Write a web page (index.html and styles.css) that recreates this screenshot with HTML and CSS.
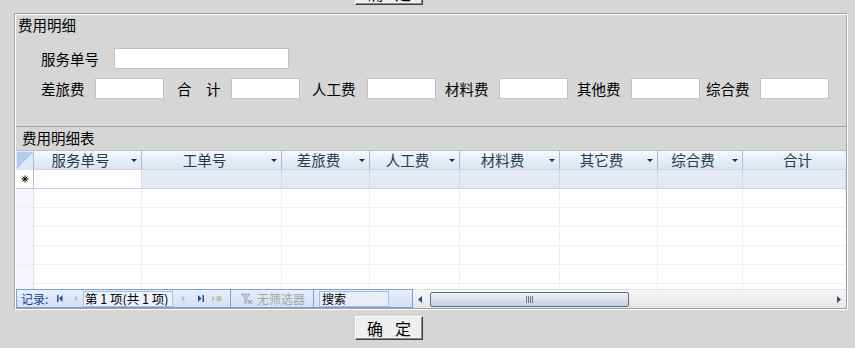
FILE: index.html
```html
<!DOCTYPE html>
<html lang="zh-CN">
<head>
<meta charset="utf-8">
<title>费用明细</title>
<link rel="stylesheet" href="styles.css">
</head>
<body>
<div class="btn-strip top-strip"><button class="btn"><span>确</span><span>定</span></button></div>

<div class="frame">
  <section class="upper">
    <div class="title">费用明细</div>
    <div class="row1">
      <span class="lbl lbl-wide">服务单号</span><span class="field field-wide"></span>
    </div>
    <div class="row2">
      <span class="lbl">差旅费</span><span class="field"></span>
      <span class="lbl">合　计</span><span class="field"></span>
      <span class="lbl">人工费</span><span class="field"></span>
      <span class="lbl">材料费</span><span class="field"></span>
      <span class="lbl">其他费</span><span class="field"></span>
      <span class="lbl">综合费</span><span class="field"></span>
    </div>
  </section>

  <div class="sub-label">费用明细表</div>

  <div class="sheet">
    <div class="grid-area">
      <div class="r hdr">
        <div class="c corner"></div>
        <div class="c"><span class="ht">服务单号</span><span class="arr"></span></div>
        <div class="c"><span class="ht">工单号</span><span class="arr"></span></div>
        <div class="c"><span class="ht">差旅费</span><span class="arr"></span></div>
        <div class="c"><span class="ht">人工费</span><span class="arr"></span></div>
        <div class="c"><span class="ht">材料费</span><span class="arr"></span></div>
        <div class="c"><span class="ht">其它费</span><span class="arr"></span></div>
        <div class="c"><span class="ht">综合费</span><span class="arr"></span></div>
        <div class="c last"><span class="ht ht-last">合计</span></div>
      </div>
      <div class="r newrow">
        <div class="c sel"><svg width="8" height="8" viewBox="0 0 8 8"><path d="M4 0.5V7.5M0.5 4H7.5M1.5 1.5L6.5 6.5M6.5 1.5L1.5 6.5" stroke="#000" stroke-width="1" fill="none"/></svg></div>
        <div class="c cur"></div><div class="c"></div><div class="c"></div><div class="c"></div><div class="c"></div><div class="c"></div><div class="c"></div><div class="c"></div>
      </div>
      <div class="r body"><div class="c sel"></div><div class="c"></div><div class="c"></div><div class="c"></div><div class="c"></div><div class="c"></div><div class="c"></div><div class="c"></div><div class="c"></div></div>
      <div class="r body"><div class="c sel"></div><div class="c"></div><div class="c"></div><div class="c"></div><div class="c"></div><div class="c"></div><div class="c"></div><div class="c"></div><div class="c"></div></div>
      <div class="r body"><div class="c sel"></div><div class="c"></div><div class="c"></div><div class="c"></div><div class="c"></div><div class="c"></div><div class="c"></div><div class="c"></div><div class="c"></div></div>
      <div class="r body"><div class="c sel"></div><div class="c"></div><div class="c"></div><div class="c"></div><div class="c"></div><div class="c"></div><div class="c"></div><div class="c"></div><div class="c"></div></div>
      <div class="r body"><div class="c sel"></div><div class="c"></div><div class="c"></div><div class="c"></div><div class="c"></div><div class="c"></div><div class="c"></div><div class="c"></div><div class="c"></div></div>
      <div class="r body"><div class="c sel"></div><div class="c"></div><div class="c"></div><div class="c"></div><div class="c"></div><div class="c"></div><div class="c"></div><div class="c"></div><div class="c"></div></div>
    </div>

    <div class="bar">
      <div class="nav">
        <div class="seg seg1">
          <span class="rec">记录:</span>
          <svg class="nb" width="15" height="17" viewBox="0 0 15 17"><rect x="5" y="5" width="1.5" height="7" fill="#1d4f91"/><path d="M10.5 5L7 8.5L10.5 12Z" fill="#1d4f91"/></svg>
          <svg class="nb" width="15" height="17" viewBox="0 0 15 17"><path d="M10 5.5L7 8.5L10 11.5Z" fill="#a9bfdd"/></svg>
          <span class="recbox">第 1 项(共 1 项)</span>
          <svg class="nb nb-next" width="16" height="17" viewBox="0 0 16 17"><path d="M6 5.5L9 8.5L6 11.5Z" fill="#a9bfdd"/></svg>
          <svg class="nb" width="16" height="17" viewBox="0 0 16 17"><path d="M6 5L9.5 8.5L6 12Z" fill="#1d4f91"/><rect x="10.5" y="5" width="1.5" height="7" fill="#1d4f91"/></svg>
          <svg class="nb" width="16" height="17" viewBox="0 0 16 17"><path d="M4 5.5L7 8.5L4 11.5Z" fill="#a9bfdd"/><rect x="8.5" y="6" width="5" height="5" fill="#d9c9a8"/><path d="M9 6.5L13 10.5M13 6.5L9 10.5M11 6V11M8.5 8.5H13.5" stroke="#bfb6a0" stroke-width="0.8"/></svg>
        </div>
        <div class="seg seg2">
          <svg class="filt" width="13" height="13" viewBox="0 0 13 13"><path d="M1 2H10L6.8 6V10.5L4.8 11.5V6Z" fill="#c7ccd4" stroke="#9aa3b1" stroke-width="0.8"/><path d="M8 8L12 12M12 8L8 12" stroke="#9aa3b1" stroke-width="1.2"/></svg>
          <span class="nofilt">无筛选器</span>
        </div>
        <div class="seg seg3">
          <span class="search">搜索</span>
        </div>
      </div>
      <div class="hscroll">
        <svg class="sarr" width="14" height="17" viewBox="0 0 14 17"><path d="M9 5L5 8.5L9 12Z" fill="#3a4a78"/></svg>
        <div class="thumb"><span class="grip"></span></div>
        <div class="spacer"></div>
        <svg class="sarr" width="14" height="17" viewBox="0 0 14 17"><path d="M5 5L9 8.5L5 12Z" fill="#3a4a78"/></svg>
      </div>
    </div>
  </div>
</div>

<div class="btn-strip bottom-strip"><button class="btn"><span>确</span><span>定</span></button></div>
</body>
</html>
```

FILE: styles.css
```css
html, body {
  margin: 0;
  padding: 0;
}
body {
  width: 855px;
  height: 348px;
  overflow: hidden;
  background: #d6d6d6;
  font-family: "Noto Sans CJK SC", "Noto Sans", sans-serif;
  color: #000;
}

/* buttons */
.btn-strip {
  display: flex;
  padding-left: 355px;
}
.top-strip {
  height: 5px;
  overflow: hidden;
  align-items: flex-end;
}
.bottom-strip {
  margin-top: 6px;
}
.btn {
  flex: none;
  width: 68px;
  height: 24px;
  box-sizing: border-box;
  padding: 0;
  margin: 0;
  background: #efefef;
  border: 1px solid;
  border-color: #ffffff #404040 #404040 #ffffff;
  box-shadow: inset -1px -1px #8a8a8a;
  font-family: "Noto Sans CJK SC", sans-serif;
  font-size: 16px;
  line-height: 20px;
  color: #000;
  display: flex;
  justify-content: center;
  align-items: center;
  gap: 12px;
}

/* outer frame */
.frame {
  margin: 8px 0 0 14px;
  width: 834px;
  height: 297px;
  box-sizing: border-box;
  border: 1px solid;
  border-color: #a0a0a0 #ffffff #ffffff #a0a0a0;
  box-shadow: inset 1px 1px #ffffff, inset -1px -1px #a0a0a0;
  padding: 1px;
  display: flex;
  flex-direction: column;
}

.upper {
  height: 111px;
  flex: none;
  border-bottom: 1px solid #a0a0a0;
  font-size: 14.5px;
}
.title {
  line-height: 20px;
  padding-left: 2px;
}
.row1 {
  display: flex;
  align-items: center;
  height: 21px;
  margin-top: 13px;
  padding-left: 25px;
}
.lbl {
  line-height: 20px;
  white-space: nowrap;
}
.lbl-wide {
  width: 73px;
}
.field {
  display: block;
  height: 21px;
  width: 69px;
  box-sizing: border-box;
  border: 1px solid #c3c3c3;
  background: #ffffff;
}
.field-wide {
  width: 175px;
}
.row2 {
  display: grid;
  grid-template-columns: 54px 82px 54px 81px 55px 78px 54px 78px 54px 75px 54px 69px;
  align-items: center;
  height: 21px;
  margin-top: 9px;
  padding-left: 25px;
}

.sub-label {
  flex: none;
  height: 23px;
  line-height: 22px;
  padding-left: 6px;
  font-size: 14.5px;
}

/* datasheet */
.sheet {
  flex: none;
  height: 158px;
  box-sizing: border-box;
  border-top: 1px solid #b9c4d2;
  display: flex;
  flex-direction: column;
  background: #ffffff;
}
.grid-area {
  flex: 1;
  overflow: hidden;
  background: #ffffff;
}
.r {
  display: grid;
  grid-template-columns: 18px 108px 140px 88px 90px 100px 98px 85px 103px;
  height: 19px;
}
.c {
  box-sizing: border-box;
  border-right: 1px solid #eceff4;
  border-bottom: 1px solid #eceff4;
}

.hdr {
  background: linear-gradient(#f6f8fc, #d9e2ee);
  font-size: 14.5px;
  color: #2a3a4e;
}
.hdr .c {
  border-right: 1px solid #a9bcd6;
  border-bottom: 1px solid #cbd6e4;
  display: flex;
  align-items: center;
}
.hdr .c.last {
  border-right: none;
}
.ht {
  flex: 1;
  text-align: center;
  line-height: 16px;
  white-space: nowrap;
}
.ht-last {
  padding-left: 6px;
}
.arr {
  width: 14px;
  height: 16px;
  display: flex;
  align-items: center;
  justify-content: center;
}
.arr::after {
  content: "";
  width: 0;
  height: 0;
  border-left: 3px solid transparent;
  border-right: 3px solid transparent;
  border-top: 3px solid #2b2b2b;
}
.hdr .corner {
  border: 1px solid #dfe7f2;
  border-right: 1px solid #a9bcd6;
  background: linear-gradient(to bottom right, #b3cbea 50%, #dfe8f5 50%);
}

.newrow {
  background: #e5e9f4;
}
.newrow .c {
  border-right: 1px solid #d1d9e6;
  border-bottom: 1px solid #c8d0de;
}
.newrow .sel {
  background: #ffffff;
  border-right: 1px solid #a9bcd6;
  display: flex;
  align-items: center;
  padding-left: 5px;
}
.newrow .cur {
  background: #ffffff;
}

.body .sel {
  background: #f4f4fc;
  border-right: 1px solid #dfe4ee;
}

/* bottom bar */
.bar {
  flex: none;
  height: 19px;
  display: flex;
}
.nav {
  width: 397px;
  height: 19px;
  box-sizing: border-box;
  border: 1px solid #7d9ecf;
  background: linear-gradient(#e6eefa, #d3e1f4);
  display: flex;
  font-size: 12px;
}
.seg {
  height: 17px;
  box-sizing: border-box;
  display: flex;
  align-items: center;
}
.seg1 {
  width: 214px;
  border-right: 1px solid #7d9ecf;
  padding-left: 4px;
}
.seg2 {
  width: 83px;
  border-right: 1px solid #7d9ecf;
  padding-left: 9px;
}
.seg3 {
  width: 98px;
  padding-left: 5px;
}
.rec {
  width: 31px;
  color: #15428b;
  line-height: 16px;
}
.nb {
  flex: none;
  display: block;
}
.recbox {
  width: 90px;
  height: 16px;
  box-sizing: border-box;
  margin-left: 1px;
  border: 1px solid #a3bde3;
  background: #edf3fc;
  font-size: 12.5px;
  line-height: 14px;
  padding-left: 1px;
  white-space: nowrap;
  overflow: hidden;
}
.nb-next {
  margin-left: 3px;
}
.filt {
  flex: none;
  display: block;
}
.nofilt {
  margin-left: 4px;
  color: #a4a4a4;
  line-height: 16px;
  white-space: nowrap;
}
.search {
  width: 70px;
  height: 16px;
  box-sizing: border-box;
  border: 1px solid #a3bde3;
  background: #e6eef9;
  line-height: 14px;
  padding-left: 2px;
}

.hscroll {
  flex: 1;
  height: 19px;
  box-sizing: border-box;
  border-top: 1px solid #dcdcdc;
  background: linear-gradient(#f6f6f6, #e6e6e6);
  display: flex;
  align-items: center;
}
.sarr {
  flex: none;
  display: block;
}
.thumb {
  flex: none;
  width: 199px;
  height: 15px;
  box-sizing: border-box;
  margin-left: 3px;
  border: 1px solid #5b6b91;
  border-radius: 2px;
  background: linear-gradient(#f2f5fa, #c6cede);
  display: flex;
  align-items: center;
  justify-content: center;
}
.grip {
  width: 7px;
  height: 7px;
  background: repeating-linear-gradient(90deg, #6d7792 0 1px, transparent 1px 2px);
}
.spacer {
  flex: 1;
}
```
